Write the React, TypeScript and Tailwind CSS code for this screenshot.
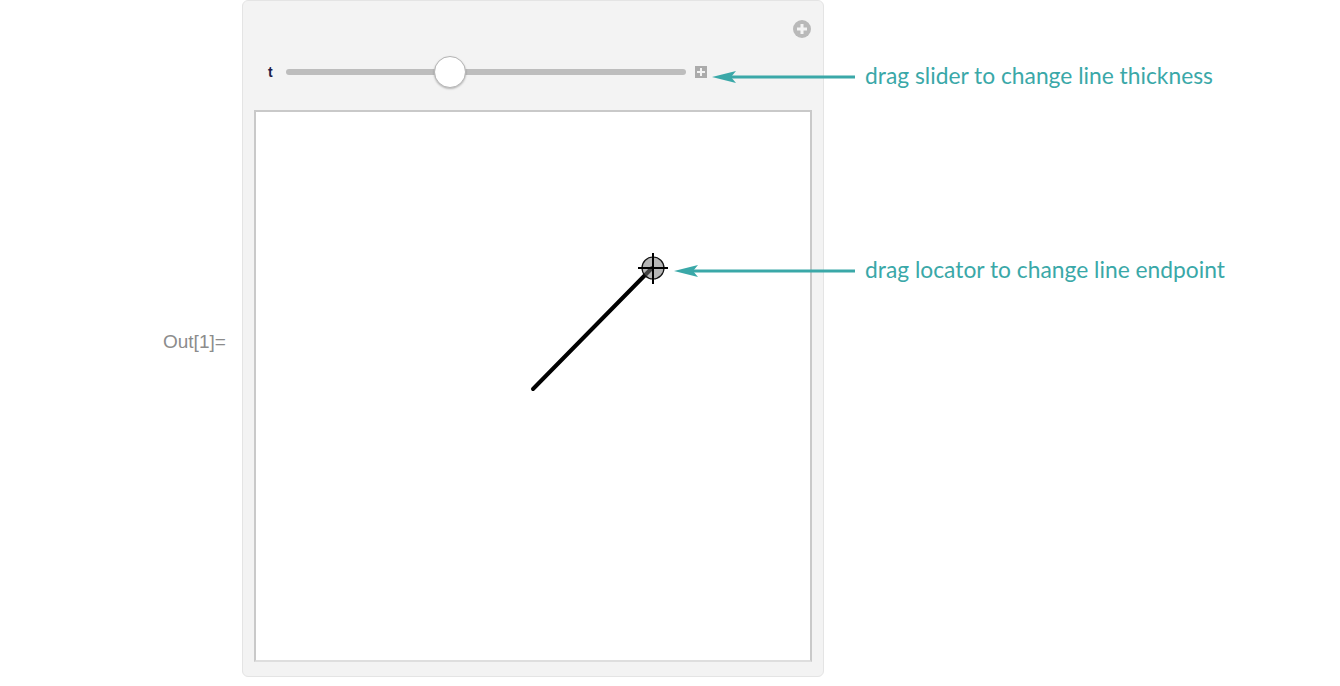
function Arrow({ width }: { width: number }) {
  return (
    <svg width={width} height={16} viewBox={`0 0 ${width} 16`} className="shrink-0">
      <line x1={18} y1={8} x2={width} y2={8} stroke="#3aa8a8" strokeWidth={3} />
      <polygon points="0,8 24,2 19,8 24,14" fill="#3aa8a8" />
    </svg>
  );
}

function Note({ width, text }: { width: number; text: string }) {
  return (
    <div className="flex items-center gap-[10px]">
      <Arrow width={width} />
      <span className="-mt-[3px] whitespace-nowrap text-[22.8px] leading-none text-[#3aa8a8] font-['Lato',sans-serif]">
        {text}
      </span>
    </div>
  );
}

function App() {
  return (
    <div className="relative h-[686px] w-[1340px] overflow-hidden bg-white">
      <div className="flex h-full items-start">
        <div className="mt-[332px] w-[242px] pl-[163px] text-[19px] leading-none text-[#8c8c8c] font-['Liberation_Sans',sans-serif]">
          Out[1]=
        </div>
        <div className="flex h-[677px] w-[582px] flex-col rounded-b-[6px] rounded-t-[6px] border border-[#e4e4e4] bg-[#f3f3f3] px-[11px]">
          <div className="flex justify-end pt-[19px] pr-[1px]">
            <svg width={18} height={18} viewBox="0 0 18 18">
              <circle cx={9} cy={9} r={9} fill="#b9b9b9" />
              <rect x={4} y={7.5} width={10} height={3} fill="#f3f3f3" />
              <rect x={7.5} y={4} width={3} height={10} fill="#f3f3f3" />
            </svg>
          </div>
          <div className="mt-[17px] flex h-[34px] items-center pl-[14px]">
            <span className="w-[18px] text-[14px] font-bold text-[#1c1c4a] font-['Liberation_Sans',sans-serif]">
              t
            </span>
            <div className="relative h-[6px] w-[400px] rounded-full bg-[#bdbdbd]">
              <div className="absolute top-[-13px] left-[148px] h-[32px] w-[32px] rounded-full border border-[#b5b5b5] bg-white shadow-[0_1px_2px_rgba(0,0,0,0.25)]" />
            </div>
            <div className="ml-[9px] flex h-[12px] w-[12px] items-center justify-center bg-[#ababab]">
              <svg width={8} height={8} viewBox="0 0 8 8">
                <rect x={0} y={3} width={8} height={2} fill="#f3f3f3" />
                <rect x={3} y={0} width={2} height={8} fill="#f3f3f3" />
              </svg>
            </div>
          </div>
          <div className="mt-[21px] h-[552px] w-[558px] border-2 border-[#c9c9c9] border-b-[#dedede] bg-white">
            <svg width={554} height={548} viewBox="0 0 554 548">
              <line x1={277} y1={277} x2={396} y2={156} stroke="#000" strokeWidth={4} strokeLinecap="round" />
              <circle cx={397} cy={156} r={11} fill="rgba(120,120,120,0.55)" stroke="#111" strokeWidth={1.2} />
              <line x1={382} y1={156} x2={412} y2={156} stroke="#000" strokeWidth={2} />
              <line x1={397} y1={141} x2={397} y2={172} stroke="#000" strokeWidth={2} />
            </svg>
          </div>
        </div>
      </div>
      <div className="absolute top-[67px] left-[712px]">
        <Note width={143} text="drag slider to change line thickness" />
      </div>
      <div className="absolute top-[261px] left-[674px]">
        <Note width={181} text="drag locator to change line endpoint" />
      </div>
    </div>
  );
}

export default App;
